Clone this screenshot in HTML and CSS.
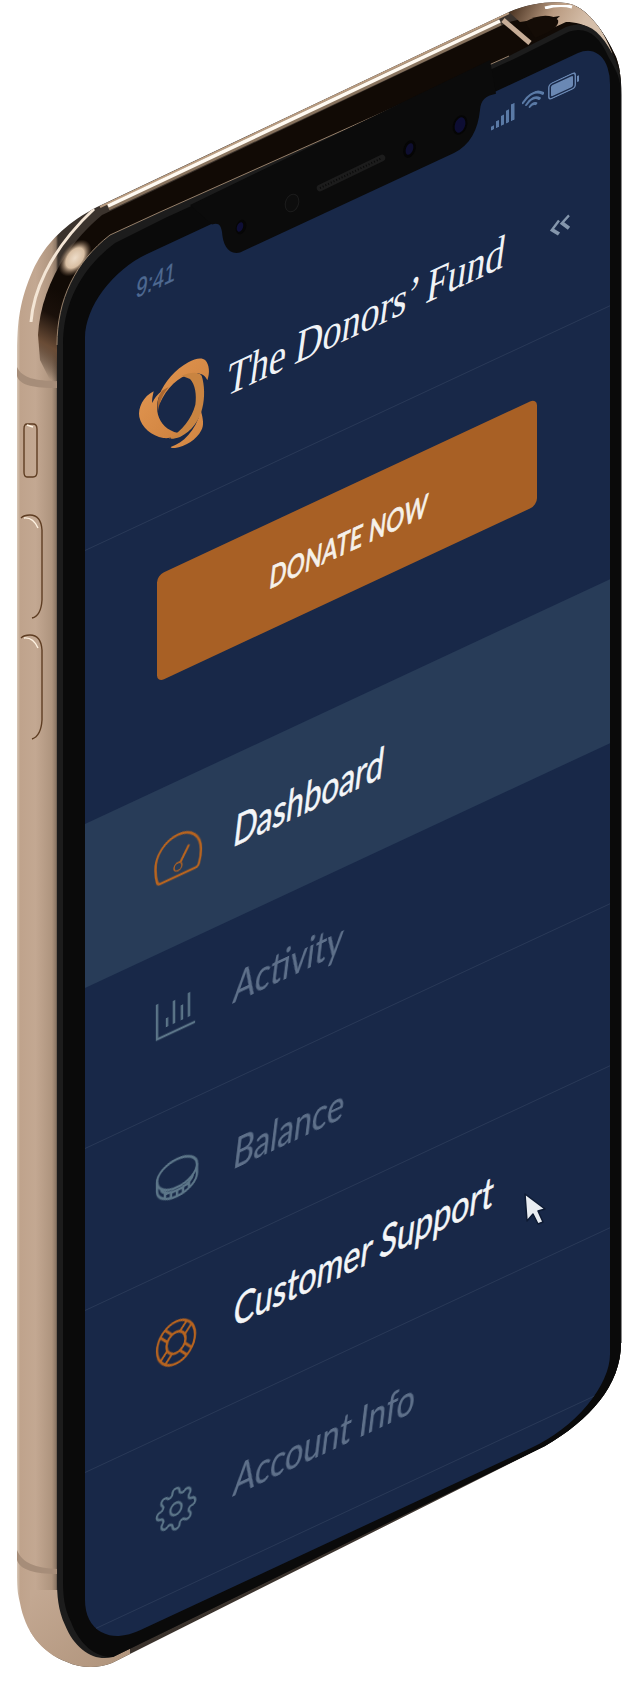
FILE: index.html
```html
<!DOCTYPE html>
<html lang="en">
<head>
<meta charset="utf-8">
<title>The Donors' Fund</title>
<link rel="stylesheet" href="styles.css">
</head>
<body>
<div class="stage">
  <svg class="layer" viewBox="0 0 629 1684" width="629" height="1684" aria-hidden="true">
    <defs>
      <linearGradient id="gold" gradientUnits="userSpaceOnUse" x1="17" y1="0" x2="58" y2="0">
        <stop offset="0" stop-color="#d8c8b8"/>
        <stop offset=".08" stop-color="#bfa38c"/>
        <stop offset=".45" stop-color="#c3a892"/>
        <stop offset=".85" stop-color="#ae947e"/>
        <stop offset=".95" stop-color="#8d7866"/>
        <stop offset="1" stop-color="#3b332d"/>
      </linearGradient>
      <linearGradient id="foot" gradientUnits="userSpaceOnUse" x1="25" y1="1600" x2="90" y2="1680">
        <stop offset="0" stop-color="#c3a892"/>
        <stop offset="1" stop-color="#b2967e"/>
      </linearGradient>
      <linearGradient id="dark" gradientUnits="userSpaceOnUse" x1="0" y1="352" x2="40" y2="280">
        <stop offset="0" stop-color="#1c120b" stop-opacity="0"/>
        <stop offset=".35" stop-color="#6a4c36"/>
        <stop offset=".7" stop-color="#1a100a"/>
        <stop offset="1" stop-color="#110a05"/>
      </linearGradient>
      <radialGradient id="spot">
        <stop offset="0" stop-color="#eddcc8"/>
        <stop offset=".55" stop-color="#d8bea2"/>
        <stop offset="1" stop-color="#8a6a50" stop-opacity="0"/>
      </radialGradient>
      <linearGradient id="crown" gradientUnits="userSpaceOnUse" x1="509" y1="0" x2="621" y2="60">
        <stop offset="0" stop-color="#3a2414"/>
        <stop offset=".35" stop-color="#b99a80"/>
        <stop offset=".6" stop-color="#d4bda8"/>
        <stop offset="1" stop-color="#d8c5b2"/>
      </linearGradient>
      <filter id="soft" x="-10%" y="-10%" width="120%" height="120%"><feGaussianBlur stdDeviation=".6"/></filter>
      <clipPath id="shell">
        <path d="M17 357C17 320 20 300 33 270C42 250 60 226 97 207L509 12C530 3 552 1 566 3C585 5 604 30 616 57C620 68 621 75 621 95V1343C621 1385 590 1420 545 1446L112 1663C97 1669 80 1668 67 1662C40 1652 25 1630 20 1603C18 1595 17 1590 17 1575Z"/>
      </clipPath>
    </defs>
    <g clip-path="url(#shell)">
      <rect x="0" y="0" width="629" height="1684" fill="url(#gold)"/>
      <path d="M30 1590H130V1684H30Z" fill="url(#foot)"/>
      <path d="M17 367C22 378 35 381 58 381V388C35 388 20 386 17 376Z" fill="#a68d79"/>
      <path d="M17 1550C22 1563 35 1568 58 1569V1574C35 1574 20 1570 17 1560Z" fill="#a68d79"/>
      <path d="M38 335C40 295 62 248 102 215L509 22L640 -10V200L60 400L40 360Z" fill="url(#dark)"/>
      <path d="M509 12C530 3 552 0 566 3C590 6 606 30 622 80L612 60C600 30 585 22 566 22L540 34L560 16L520 22Z" fill="url(#crown)"/>
      <path d="M525 22C538 14 552 14 558 20C560 27 548 33 535 38Z" fill="#140c06"/>
      <path d="M503 20L530 43" stroke="#c7ad97" stroke-width="5" fill="none"/>
      <path d="M100 207L509 13" stroke="#b89b80" stroke-width="2" fill="none"/>
      <path d="M108 207L500 22" stroke="#c8a888" stroke-width="7" fill="none" opacity=".55" filter="url(#soft)"/>
      <path d="M108 206L500 21" stroke="#fffaf2" stroke-width="3.500" fill="none" filter="url(#soft)"/>
      <path d="M545 8C555 5 565 5 572 7" stroke="#fff" stroke-width="3" fill="none" filter="url(#soft)"/>
      <path d="M31 322C33 296 46 254 94 209" stroke="#f4e6d6" stroke-width="3" fill="none" filter="url(#soft)"/>
      <ellipse cx="75" cy="258" rx="13" ry="21" transform="rotate(38 75 258)" fill="url(#spot)"/>
    </g>
    <path class="btn-ring" d="M27 424H33Q37 424 37 429V472Q37 477 33 477H27Q24 477 24 472V429Q24 424 27 424Z"/>
    <path class="btn-ring" d="M21 518Q24 515 30 515Q41 515 42 530V600Q41 616 32 618"/>
    <path class="btn-ring" d="M21 638Q24 635 30 635Q41 635 42 650V720Q41 736 32 739"/>
    <path class="btn-glint" d="M24 518Q33 517 38 528M24 638Q33 637 38 648M27 425L33 427"/>
    <path d="M57 345C57 300 75 262 110 235L160 212L509 56L566 27C585 19 600 30 612 53C618 65 621 75 621 95V1343C621 1385 590 1420 545 1446L113 1657C95 1662 75 1650 65 1625C58 1610 57 1595 57 1580Z" fill="#1c1c1c"/>
    <path d="M63 345C63 302 82 268 115 243L165 218L516 58L566 33C585 25 598 34 608 56C614 68 621 75 621 95V1343C621 1385 590 1420 545 1446L113 1657C97 1658 80 1646 71 1622C64 1608 63 1595 63 1580Z" fill="#0a0a0a"/>
    <path d="M57 345C57 300 75 262 110 235L160 212L509 56" stroke="#b59a80" stroke-width=".8" fill="none"/>
    <path d="M612 53C618 65 621 75 621 95V1343" stroke="#131313" stroke-width="1" fill="none"/>
  </svg>

  <main class="screen">
    <header class="head">
      <div class="status">
        <span class="time">9:41</span>
        <div class="status-icons">
          <svg class="ic-signal" width="24" height="17" viewBox="0 0 24 17"><path d="M0 13h3v4H0zM5 10h3v7H5zM10 7h3v10h-3zM15 4h3v13h-3zM20 0h3.500v17H20z"/></svg>
          <svg class="ic-wifi" width="22" height="16" viewBox="0 0 22 16"><path d="M1 6Q11 -4 21 6M4.500 9.500Q11 3 17.500 9.500M8 13Q11 10.500 14 13"/></svg>
          <svg class="ic-batt" width="32" height="17" viewBox="0 0 32 17"><rect x=".8" y=".8" width="26.500" height="15.400" rx="3"/><rect class="batt-fill" x="3" y="3" width="22" height="11" rx="1.500"/><path class="batt-nub" d="M29 5.500h2v6h-2z"/></svg>
        </div>
      </div>
      <div class="brand">
        <svg class="logo" width="110" height="120" viewBox="0 0 330 360" aria-label="logo">
          <defs>
            <linearGradient id="lg" x1="0" y1="0" x2="1" y2="1">
              <stop offset="0" stop-color="#e0944f"/>
              <stop offset="1" stop-color="#cf8340"/>
            </linearGradient>
          </defs>
          <path fill="url(#lg)" d="M118 165C135 125 165 90 205 68C225 57 245 52 256 62C268 75 270 100 262 122C255 105 240 98 215 102C175 110 140 145 120 190Z"/>
          <path fill="#c98441" d="M185 108C210 98 235 95 245 108C254 135 255 175 247 205C240 240 215 275 180 292C165 298 150 298 148 296C185 275 216 235 226 195C230 165 226 135 210 118Z"/>
          <path fill="url(#lg)" d="M152 322C190 310 225 275 243 215C250 240 252 258 244 272C230 300 195 322 165 325C158 325 152 325 152 322Z"/>
          <path fill="url(#lg)" d="M101 155C98 170 95 180 97 190C103 175 112 165 125 155C112 175 108 200 114 225C122 252 140 272 175 280C165 292 150 297 130 295C95 288 65 265 58 232C53 205 70 170 101 155Z"/>
          <path fill="#a96630" d="M120 190C126 170 135 155 146 142L128 152C115 165 110 190 114 215C118 190 120 195 120 190Z"/>
        </svg>
        <h1 class="name">The Donors’ Fund</h1>
        <svg class="collapse" width="22" height="19" viewBox="0 0 22 17"><path d="M9 1.500L2 7.500L9 15M19 1L12 5.500L19 14"/></svg>
      </div>
    </header>

    <a class="donate"><span class="donate-text">DONATE NOW</span></a>

    <nav class="menu">
      <div class="row row-dash on">
        <svg class="icon" viewBox="0 0 46 46"><path d="M5 44H41Q43 44 44 41C46 35 46 32 46 28C46 14 36 3 23 3C10 3 0 14 0.500 28C0.500 33 1 37 2 41Q3 44 5 44Z"/><circle cx="23" cy="35" r="4"/><path d="M25.500 31.500L34 18"/></svg>
        <span class="label">Dashboard</span>
      </div>
      <div class="row row-act">
        <svg class="icon" viewBox="0 0 46 46"><path d="M2 6V41H40M12 33V24M19 33V10M27 33V18M34 33V9"/></svg>
        <span class="label">Activity</span>
      </div>
      <div class="row row-bal">
        <svg class="icon" viewBox="0 0 46 46"><ellipse cx="22" cy="17" rx="20" ry="14"/><path d="M2 17V26C2 34 11 40 22 40C33 40 42 34 42 26V17M6 26C8 32 14 34 22 34C30 34 36 32 38 26M10 31V37M16 33V39M22 34V40M28 33V39M34 31V37"/></svg>
        <span class="label">Balance</span>
      </div>
      <div class="row row-help on">
        <svg class="icon" viewBox="0 0 46 46"><g transform="translate(21 23) scale(.95 1.05)"><circle r="20"/><circle r="10"/><path d="M4.200 9.200L11.400 16.400M9.200 4.200L16.400 11.400M-4.200 9.200L-11.400 16.400M-9.200 4.200L-16.400 11.400M4.200 -9.200L11.400 -16.400M9.200 -4.200L16.400 -11.400M-4.200 -9.200L-11.400 -16.400M-9.200 -4.200L-16.400 -11.400"/></g></svg>
        <span class="label">Customer Support</span>
      </div>
      <div class="row row-acct">
        <svg class="icon" viewBox="0 0 46 46"><g transform="translate(0 1) scale(1.75 1.85)"><circle cx="12" cy="12" r="3.200"/><path class="thin" d="M19.400 15a1.650 1.650 0 0 0 .33 1.820l.06.06a2 2 0 0 1 0 2.830 2 2 0 0 1-2.830 0l-.06-.06a1.650 1.650 0 0 0-1.820-.33 1.650 1.650 0 0 0-1 1.510V21a2 2 0 0 1-2 2 2 2 0 0 1-2-2v-.09A1.650 1.650 0 0 0 9 19.400a1.650 1.650 0 0 0-1.820.33l-.06.06a2 2 0 0 1-2.830 0 2 2 0 0 1 0-2.830l.06-.06a1.650 1.650 0 0 0 .33-1.820 1.650 1.650 0 0 0-1.510-1H3a2 2 0 0 1-2-2 2 2 0 0 1 2-2h.09A1.650 1.650 0 0 0 4.600 9a1.650 1.650 0 0 0-.33-1.820l-.06-.06a2 2 0 0 1 0-2.830 2 2 0 0 1 2.830 0l.06.06a1.650 1.650 0 0 0 1.820.33H9a1.650 1.650 0 0 0 1-1.510V3a2 2 0 0 1 2-2 2 2 0 0 1 2 2v.09a1.650 1.650 0 0 0 1 1.510 1.650 1.650 0 0 0 1.820-.33l.06-.06a2 2 0 0 1 2.830 0 2 2 0 0 1 0 2.830l-.06.06a1.650 1.650 0 0 0-.33 1.820V9a1.650 1.650 0 0 0 1.510 1H21a2 2 0 0 1 2 2 2 2 0 0 1-2 2h-.09a1.650 1.650 0 0 0-1.510 1z"/></g></svg>
        <span class="label">Account Info</span>
      </div>
    </nav>
  </main>

  <svg class="layer" viewBox="0 0 629 1684" width="629" height="1684" aria-hidden="true">
    <path d="M190 205L212 224.500C219 222 221 226 222 232C223 245 228 255 240 252.500L454 153C470 145 478 130 480 110C481 100 485 96 496 93.700L490 60Z" fill="#0b0b0b"/>
    <ellipse cx="241" cy="227" rx="5" ry="7.500" transform="rotate(20 241 227)" fill="#060606"/>
    <ellipse cx="240" cy="227" rx="3" ry="5" transform="rotate(20 240 227)" fill="#0e0e36"/>
    <ellipse cx="292" cy="203" rx="6.500" ry="9" transform="rotate(20 292 203)" fill="#0d0d0d" stroke="#1c1c1c"/>
    <path d="M320 188L382 158" stroke="#1c1c1c" stroke-width="6.500" stroke-linecap="round" fill="none"/>
    <path d="M320 188L382 158" stroke="#0a0a0a" stroke-width="2" stroke-dasharray="1 2" fill="none"/>
    <ellipse cx="409.500" cy="149" rx="6" ry="9" transform="rotate(20 409.500 149)" fill="#050505"/>
    <ellipse cx="409.500" cy="149" rx="3.500" ry="6" transform="rotate(20 409.500 149)" fill="#0e0e30"/>
    <ellipse cx="460" cy="125" rx="7" ry="10" transform="rotate(20 460 125)" fill="#050505"/>
    <ellipse cx="460" cy="125" rx="5" ry="8" transform="rotate(20 460 125)" fill="#0d0d33"/>
    <path d="M525 1194L527 1221L533 1214L538 1224L543 1222L538 1211L545 1209Z" fill="#e9edf2" stroke="#0d1a33" stroke-width="1.500" stroke-linejoin="round"/>
  </svg>
</div>
</body>
</html>
```

FILE: styles.css
```css
* { box-sizing: border-box; margin: 0; padding: 0; }
html, body { background: #fff; }
body { width: 629px; height: 1684px; overflow: hidden; }

.stage { position: relative; width: 629px; height: 1684px; overflow: hidden; background: #fff; }
.layer { position: absolute; left: 0; top: 0; display: block; pointer-events: none; }
.btn-ring { fill: none; stroke: #5e3d22; stroke-width: 1.400; }
.btn-glint { fill: none; stroke: #fff3e2; stroke-width: 1.400; }

/* the tilted screen: everything inside is laid out flat, then sheared */
.screen {
  position: absolute;
  left: 85px;
  top: 283px;
  width: 525px;
  height: 1373px;
  overflow: hidden;
  background: #182848;
  border-radius: 62px 32px 78px 55px / 54px 46px 57px 56px;
  transform: skewY(-25deg);
  transform-origin: 0 0;
  font-family: Lato, "Open Sans", sans-serif;
}

.head { height: 268px; border-bottom: 1.500px solid #2a3a58; }

.status { height: 73px; display: flex; justify-content: space-between; align-items: flex-start; padding: 17px 30px 0 50px; }
.time {
  font: 400 26px/1 "Liberation Sans", Arial, sans-serif;
  color: #4f6a92;
  -webkit-text-stroke: .3px #4f6a92;
  transform: matrix(.78, 0, -.12, 1, 0, 0);
  transform-origin: 0 90%;
}
.status-icons { display: flex; align-items: flex-end; gap: 4px; }
.status-icons svg { display: block; }
.ic-signal { fill: #5a7aa6; margin: 0 3px -3px 0; }
.ic-wifi { fill: none; stroke: #5a7aa6; stroke-width: 2.600; stroke-linecap: round; }
.ic-batt { fill: none; stroke: #6a88b4; stroke-width: 1.400; }
.batt-fill { fill: #6a88b4; stroke: none; }
.batt-nub { fill: #6a88b4; stroke: none; }

.brand { height: 195px; display: flex; align-items: flex-start; padding: 0 38px 0 35px; }
.logo { flex: none; transform: skewY(25deg); transform-origin: 0 0; display: block; }
.name {
  flex: none;
  width: 300px;
  margin: 68px 0 0 -5px;
  font: 400 46px/1 "Liberation Serif", "Times New Roman", serif;
  color: #f0f3f6;
  white-space: nowrap;
  transform: matrix(.825, 0, -.15, 1, 0, 0);
  transform-origin: 0 84%;
}
.collapse { flex: none; margin: 83px 0 0 auto; fill: none; stroke: #8496ac; stroke-width: 3; }

.donate {
  display: flex;
  align-items: center;
  justify-content: center;
  width: 380px;
  height: 107px;
  margin: 58px 0 108px 72px;
  background: #a86025;
  border-radius: 7px;
}
.donate-text {
  font: 500 30px/1 Lato, sans-serif;
  letter-spacing: .5px;
  color: #f6f1ea;
  -webkit-text-stroke: .7px #f6f1ea;
  white-space: nowrap;
  transform: matrix(.74, 0, -.12, 1, 0, 0) translateX(3px);
}

.menu { display: flex; flex-direction: column; }
.row {
  display: flex;
  align-items: flex-start;
  gap: 31px;
  height: 161px;
  padding-left: 70px;
  border-bottom: 1.500px solid #2a3a58;
}
.icon {
  flex: none;
  width: 46px;
  height: 46px;
  display: block;
  overflow: visible;
  fill: none;
  stroke: #5c7689;
  stroke-width: 2.400;
  filter: blur(.3px);
}
.icon .thin, .icon circle { stroke-width: 1.300; }
.row-help .icon circle { stroke-width: 2.400; }
.row-help .icon path { stroke-width: 2.400; }
.label {
  font: 400 42px/1 Lato, sans-serif;
  color: #5e708a;
  -webkit-text-stroke: .2px #5e708a;
  white-space: nowrap;
  transform: matrix(.77, 0, -.13, 1, 0, 0);
  transform-origin: 0 88%;
  filter: blur(.3px);
}
.on .icon { stroke: #b8641f; }
.on .label { color: #f4f6f8; -webkit-text-stroke: .5px #f4f6f8; filter: none; }

.row-dash { height: 164px; padding-top: 51px; background: #283c58; border-bottom: 0; }
.row-dash .label { margin-top: 4px; transform: matrix(.75, 0, -.13, 1, 0, 0); }
.row-act { padding-top: 44px; }
.row-act .label { margin-top: 3px; }
.row-bal { height: 162px; padding-top: 50px; }
.row-bal .label { margin-top: 2px; }
.row-help { height: 162px; padding-top: 51px; }
.row-help .label { margin-top: -3px; }
.row-acct { padding-top: 55px; }
.row-acct .label { margin-top: 0; }
```
